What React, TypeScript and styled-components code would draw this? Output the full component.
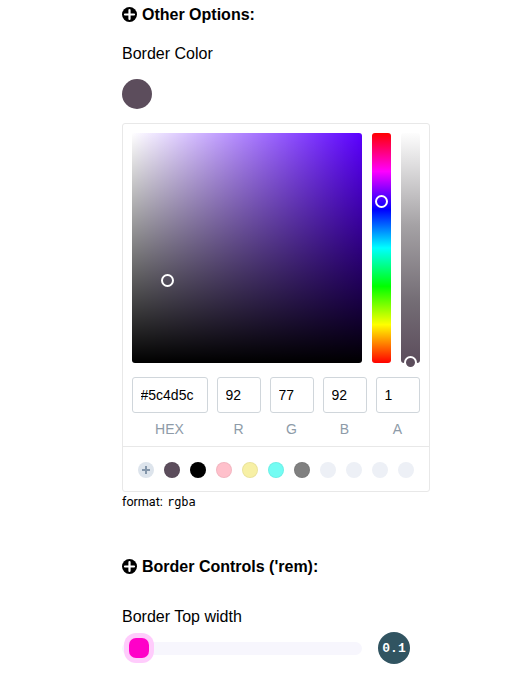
import React from 'react';
import styled, { createGlobalStyle } from 'styled-components';

const GlobalStyle = createGlobalStyle`
  * { box-sizing: border-box; }
  html, body { margin: 0; background: #fff; }
  body { color: #000; font-family: "Liberation Sans", Arial, sans-serif; font-size: 16px; overflow: hidden; }
`;

const Page = styled.main`
  width: 524px;
  height: 676px;
  padding: 5px 94px 0 122px;
  display: flex;
  flex-direction: column;
  align-items: flex-start;
`;

const Heading = styled.h2`
  margin: 0;
  height: 19px;
  display: flex;
  align-items: center;
  gap: 5px;
  font-size: 16px;
  line-height: 19px;
  font-weight: 700;
  white-space: nowrap;
  svg { width: 15px; height: 15px; flex: none; }
`;

const Label = styled.label<{ $top: number }>`
  margin-top: ${p => p.$top}px;
  height: 19px;
  line-height: 19px;
`;

const CurrentColor = styled.div`
  width: 30px;
  height: 30px;
  margin-top: 16px;
  border-radius: 50%;
  background: #5c4d5c;
`;

const Picker = styled.section`
  width: 308px;
  height: 369px;
  margin-top: 14px;
  border: 1px solid #e8e8e8;
  border-radius: 3px;
`;

const Gradients = styled.div`
  display: flex;
  gap: 10px;
  height: 239px;
  padding: 9px 9px 0;
`;

const Saturation = styled.div`
  position: relative;
  width: 230px;
  height: 230px;
  border-radius: 3px;
  background: linear-gradient(to top, #000, transparent), linear-gradient(to right, #fff, transparent), #5b00ff;
`;

const Bar = styled.div<{ $fill: string }>`
  position: relative;
  width: 19px;
  height: 230px;
  border-radius: 3px;
  background: ${p => p.$fill};
`;

const Marker = styled.span<{ $x: number; $y: number; $fill?: string }>`
  position: absolute;
  left: ${p => p.$x}px;
  top: ${p => p.$y}px;
  width: 13px;
  height: 13px;
  border: 2px solid #fff;
  border-radius: 50%;
  background: ${p => p.$fill || 'transparent'};
`;

const Fields = styled.div`
  display: grid;
  grid-template-columns: 76px repeat(4, 44px);
  column-gap: 9px;
  height: 84px;
  padding: 14px 9px 0;
  border-bottom: 1px solid #e8e8e8;
`;

const Field = styled.label`
  display: flex;
  flex-direction: column;
  align-items: center;
  color: #8e9ba8;
  font-size: 14px;
  line-height: 16px;
`;

const FieldName = styled.span`
  padding-right: 1px;
`;

const Input = styled.input`
  width: 100%;
  height: 36px;
  margin-bottom: 8px;
  padding: 0 0 0 7.5px;
  border: 1px solid #d0d6db;
  border-radius: 3px;
  background: #fff;
  color: #000;
  font: 14px "Liberation Sans", Arial, sans-serif;
  outline: none;
`;

const Swatches = styled.div`
  display: flex;
  gap: 10px;
  padding: 15px 15px 0;
`;

const Swatch = styled.button<{ $color: string }>`
  width: 16px;
  height: 16px;
  padding: 0;
  border: 0;
  border-radius: 50%;
  background: ${p => p.$color};
  box-shadow: inset 0 0 0 1px rgba(0, 0, 0, 0.05);
  svg { display: block; }
`;

const EmptySwatch = styled(Swatch)`
  box-shadow: none;
`;

const Format = styled.div`
  display: flex;
  align-items: center;
  gap: 4px;
  height: 20px;
  font: 12.6px/20px Roboto, sans-serif;
`;

const Code = styled.code`
  font: 12px/20px "DejaVu Sans Mono", monospace;
`;

const Section = styled.section`
  margin-top: 45px;
  display: flex;
  flex-direction: column;
`;

const SliderRow = styled.div`
  display: flex;
  align-items: center;
  gap: 16px;
  height: 32px;
  margin-top: 6px;
`;

const Track = styled.div`
  width: 240px;
  height: 13px;
  padding-left: 7px;
  border-radius: 7px;
  background: #f7f6fd;
  display: flex;
  align-items: center;
`;

const Thumb = styled.span`
  width: 20px;
  height: 20px;
  border-radius: 7px;
  background: #ff00c8;
  box-shadow: 0 0 0 5px #ffccfc;
`;

const Value = styled.output`
  width: 32px;
  height: 32px;
  border-radius: 50%;
  background: #315461;
  color: #fff;
  font: bold 13px/34px "Liberation Mono", monospace;
  text-align: center;
`;

const PlusCircle = () => (
  <svg viewBox="0 0 15 15">
    <circle cx="7.5" cy="7.5" r="7.5" fill="currentColor" />
    <path d="M7.500 3v9M3 7.500h9" stroke="#fff" strokeWidth="2.200" strokeLinecap="round" />
  </svg>
);

const fields = [['HEX', '#5c4d5c'], ['R', '92'], ['G', '77'], ['B', '92'], ['A', '1']];
const saved = ['#5c4d5c', '#000000', '#ffc0cb', '#f7f0a5', '#73fcf3', '#808080'];

export default function App() {
  return (
    <>
      <GlobalStyle />
      <Page>
        <Heading><PlusCircle />Other Options:</Heading>
        <Label $top={20}>Border Color</Label>
        <CurrentColor />
        <Picker>
          <Gradients>
            <Saturation><Marker $x={29} $y={141} /></Saturation>
            <Bar $fill="linear-gradient(to bottom, #f00, #f0f 16.67%, #00f 33.33%, #0ff 50%, #0f0 66.67%, #ff0 83.33%, #f00)">
              <Marker $x={3} $y={62} />
            </Bar>
            <Bar $fill="linear-gradient(to bottom, #fdfdfd, #a5a2a5 40%, #746d75 73%, #5c4d5c)">
              <Marker $x={3} $y={223} $fill="#5c4d5c" />
            </Bar>
          </Gradients>
          <Fields>
            {fields.map(([name, value]) => (
              <Field key={name}><Input value={value} readOnly /><FieldName>{name}</FieldName></Field>
            ))}
          </Fields>
          <Swatches>
            <EmptySwatch $color="#dde4ec" aria-label="Add color">
              <svg width="16" height="16" viewBox="0 0 16 16" stroke="#8496aa" strokeWidth="2">
                <path d="M8 4v8M4 8h8" />
              </svg>
            </EmptySwatch>
            {saved.map(color => <Swatch key={color} $color={color} />)}
            {[0, 1, 2, 3].map(slot => <EmptySwatch key={slot} $color="#edf0f6" />)}
          </Swatches>
        </Picker>
        <Format>format: <Code>rgba</Code></Format>
        <Section>
          <Heading><PlusCircle />Border Controls ('rem):</Heading>
          <Label $top={31}>Border Top width</Label>
          <SliderRow>
            <Track><Thumb /></Track>
            <Value>0.1</Value>
          </SliderRow>
        </Section>
      </Page>
    </>
  );
}
